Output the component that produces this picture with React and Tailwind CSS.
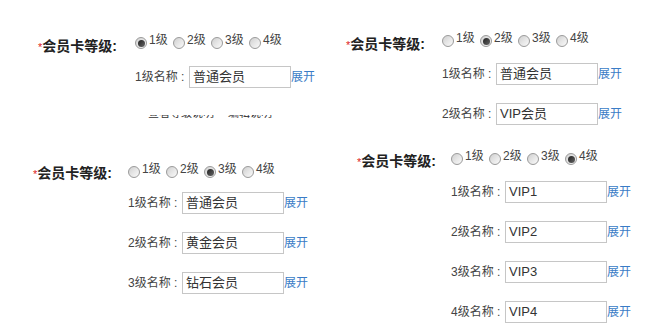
import React from "react";

const LEVELS = [1, 2, 3, 4];

const Radio = ({ checked }) => (
  <span className="relative mt-[3px] flex h-[12px] w-[12px] shrink-0 items-center justify-center rounded-full border border-[#9a9a9a] bg-gradient-to-br from-[#cfcfcf] via-[#e6e6e6] to-[#fafafa]">
    {checked && (
      <span className="h-[7px] w-[7px] rounded-full bg-gradient-to-br from-[#222] to-[#666]" />
    )}
  </span>
);

const LevelRow = ({ level, name, first }) => (
  <div className={`flex h-[22px] items-center ${first ? "" : "mt-[18px]"}`}>
    <span className="w-[54px] shrink-0 whitespace-nowrap text-[12px] leading-[12px] text-[#444]">
      {level}级名称 :
    </span>
    <div className="flex h-[22px] w-[102px] shrink-0 items-center border border-[#c6c6c6] bg-white pl-[3px] text-[13px] text-[#333]">
      {name}
    </div>
    <a className="whitespace-nowrap text-[12px] leading-[12px] text-[#3a7cc6]">展开</a>
  </div>
);

const Panel = ({ className, labelW, labelTop, firstGap, selected, names, children }) => (
  <div className={`flex ${className}`}>
    <div
      className="shrink-0 whitespace-nowrap text-[14px] leading-[14px] font-bold text-[#222]"
      style={{ width: labelW, marginTop: labelTop }}
    >
      <span className="text-[11px] font-normal text-[#d22]">*</span>
      会员卡等级:
    </div>
    <div className="flex flex-col">
      <div className="flex h-[16px] items-start">
        {LEVELS.map((lv) => (
          <label key={lv} className="flex w-[38px] items-start">
            <Radio checked={lv === selected} />
            <span className="ml-[2px] whitespace-nowrap text-[12px] leading-[12px] text-[#444]">{lv}级</span>
          </label>
        ))}
      </div>
      <div className="flex flex-col" style={{ marginTop: firstGap - 16 }}>
        {names.map((n, i) => (
          <LevelRow key={i} level={i + 1} name={n} first={i === 0} />
        ))}
      </div>
      {children}
    </div>
  </div>
);

export default function App() {
  return (
    <div className="grid h-[336px] w-[672px] grid-cols-2 overflow-hidden bg-white font-['Liberation_Sans','Noto_Sans_CJK_SC',sans-serif]">
      <div className="flex flex-col">
        <Panel
          className="mt-[34px] pl-[38px]"
          labelW={97}
          labelTop={5}
          firstGap={32}
          selected={1}
          names={["普通会员"]}
        >
          {/* half-hidden line from the cropped screenshot */}
          <div className="mt-[27px] flex h-[3px] items-end overflow-hidden pl-[13px] text-[11px] leading-[11px] text-[#333]">
            <span className="-mb-[1px]">查看等级说明</span>
            <span className="-mb-[1px] ml-[14px]">编辑说明</span>
          </div>
        </Panel>
        <Panel
          className="mt-[45px] pl-[33px]"
          labelW={95}
          labelTop={3}
          firstGap={29}
          selected={3}
          names={["普通会员", "黄金会员", "钻石会员"]}
        />
      </div>
      <div className="flex flex-col">
        <Panel
          className="mt-[32px] pl-[10px]"
          labelW={96}
          labelTop={5}
          firstGap={31}
          selected={2}
          names={["普通会员", "VIP会员"]}
        />
        <Panel
          className="mt-[25px] pl-[21px]"
          labelW={94}
          labelTop={4}
          firstGap={31}
          selected={4}
          names={["VIP1", "VIP2", "VIP3", "VIP4"]}
        />
      </div>
    </div>
  );
}
